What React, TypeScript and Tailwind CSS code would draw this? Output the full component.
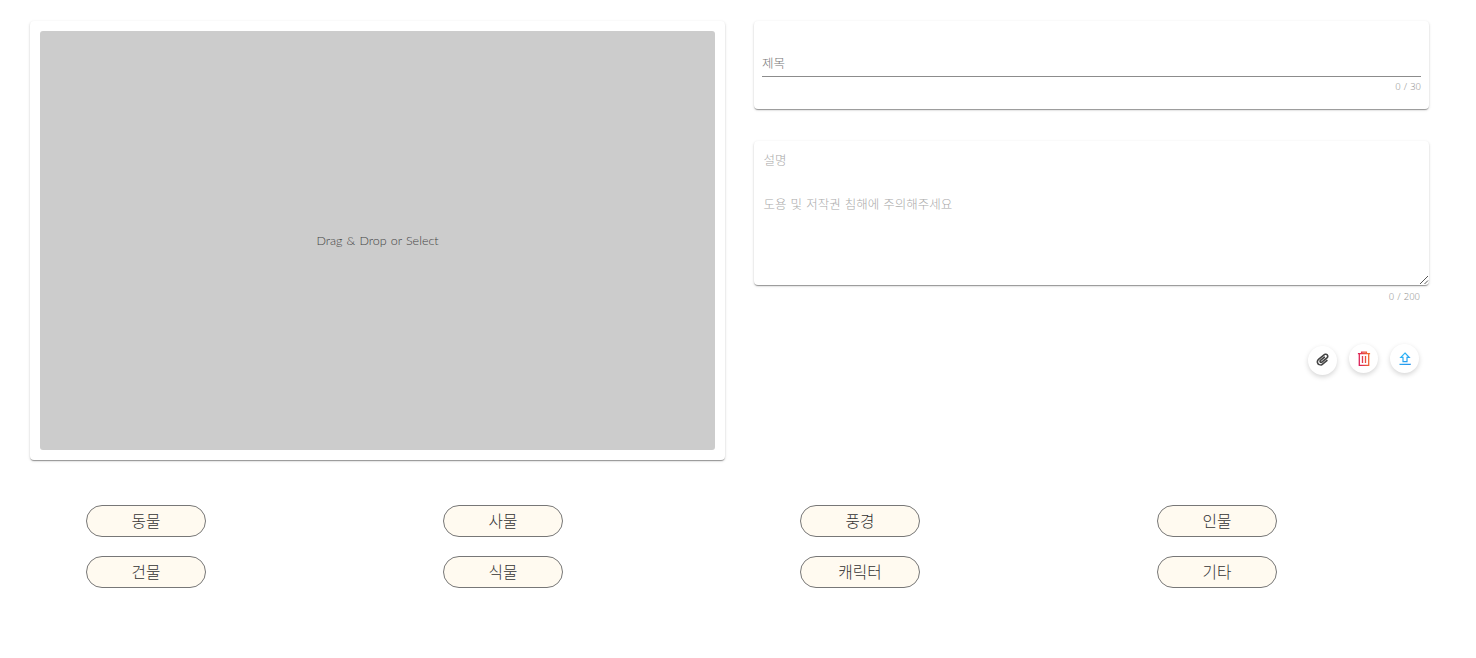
import React from "react";
import { FaPaperclip } from "react-icons/fa";

const categories = ["동물", "사물", "풍경", "인물", "건물", "식물", "캐릭터", "기타"];

const card =
  "rounded-[4px] bg-white shadow-[0_2px_1px_-1px_rgba(0,0,0,0.2),0_1px_1px_0_rgba(0,0,0,0.18),0_1px_3px_0_rgba(0,0,0,0.16)]";
const roundButton =
  "flex h-[29px] w-[29px] items-center justify-center rounded-full bg-white shadow-[0_2px_5px_rgba(0,0,0,0.17)]";
const counter =
  "text-right font-['Noto_Sans',sans-serif] text-[9.5px] leading-4 text-[#999] [word-spacing:0.6px]";

function TrashIcon() {
  return (
    <svg width="14" height="16" viewBox="0 0 14 16" fill="none" stroke="url(#trash)" strokeWidth="1.3">
      <defs>
        <linearGradient id="trash" gradientUnits="userSpaceOnUse" x1="0" y1="9" x2="14" y2="7">
          <stop offset="0" stopColor="#d8125f" />
          <stop offset="1" stopColor="#f57a2a" />
        </linearGradient>
      </defs>
      <path d="M0.9 2.6H13.1M4.6 2.4V1.1H9.4V2.4M2.3 2.8V14.3H11.7V2.8M5.5 5V12M8.5 5V12" />
    </svg>
  );
}

function UploadIcon() {
  return (
    <svg width="12" height="14" viewBox="0 0 12 14" fill="none" stroke="url(#upload)" strokeWidth="1.2">
      <defs>
        <linearGradient id="upload" gradientUnits="userSpaceOnUse" x1="0" y1="0" x2="12" y2="13">
          <stop offset="0" stopColor="#2fc0fb" />
          <stop offset="1" stopColor="#2490ea" />
        </linearGradient>
      </defs>
      <path d="M6 1L10.2 5.3H8V9.6H4V5.3H1.8Z" />
      <path d="M0.5 12.4H11.5V12.5" />
    </svg>
  );
}

export default function App() {
  return (
    <main className="h-[658px] w-[1476px] overflow-hidden bg-white font-['Noto_Sans_CJK_KR',sans-serif] font-light">
      <div className="flex gap-[29px] pt-[21px] pl-[30px]">
        <section className={`h-[439px] w-[695px] p-[10px] ${card}`}>
          <div className="flex h-full items-center justify-center rounded-[3px] bg-[#ccc] font-[Lato,sans-serif] text-[12.5px] leading-5 font-light text-[#444]">
            <span className="[word-spacing:0.7px]">Drag &amp; Drop or Select</span>
          </div>
        </section>
        <section className="w-[675px]">
          <div className={`h-[88px] px-2 pt-[30px] ${card}`}>
            <input
              placeholder="제목"
              className="block h-[26px] w-full border-b border-[#8c8c8c] bg-transparent pb-[3px] text-[12.5px] outline-none placeholder:text-[#777]"
            />
            <div className={`pt-[2px] ${counter}`}>0 / 30</div>
          </div>
          <div className="relative mt-8">
            <textarea
              placeholder={"설명\n\n도용 및 저작권 침해에 주의해주세요"}
              className={`block h-[144px] w-full resize-none px-[9.5px] pt-2 pb-2 text-[12.5px] leading-[22px] outline-none [word-spacing:1.3px] placeholder:text-[#aaa] ${card}`}
            />
            <svg
              className="pointer-events-none absolute right-0 bottom-0"
              width="10"
              height="10"
              viewBox="0 0 10 10"
              stroke="#444"
              strokeWidth="0.9"
            >
              <path d="M1 9L9 1M5.5 9L9 5.5" />
            </svg>
          </div>
          <div className={`pt-1 pr-[9px] ${counter}`}>0 / 200</div>
          <div className="mt-[39px] flex justify-end gap-3 pr-[10px]">
            <button aria-label="첨부" className={`mt-[2px] ${roundButton}`}>
              <FaPaperclip className="mb-[3px] rotate-6" size={13} color="#444" />
            </button>
            <button aria-label="삭제" className={roundButton}>
              <TrashIcon />
            </button>
            <button aria-label="업로드" className={roundButton}>
              <UploadIcon />
            </button>
          </div>
        </section>
      </div>
      <div className="mt-[45px] grid grid-cols-[repeat(4,120px)] gap-x-[237px] gap-y-[19px] pl-[86px]">
        {categories.map((name) => (
          <button
            key={name}
            className="flex h-8 items-center justify-center rounded-full border border-[#777] bg-[#fffaf0] text-[15.7px] leading-6 text-[#333]"
          >
            {name}
          </button>
        ))}
      </div>
    </main>
  );
}
